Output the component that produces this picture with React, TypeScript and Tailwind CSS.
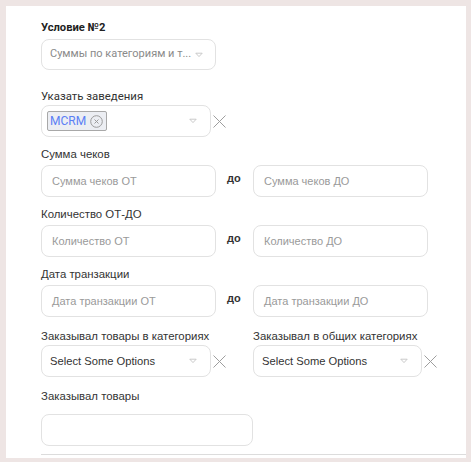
import React from 'react';

const roboto = "font-['Roboto',sans-serif]";
const arial = "font-['Liberation_Sans',Arial,sans-serif]";

const Caret: React.FC = () => (
  <svg width="8" height="6" viewBox="0 0 8 6" className="shrink-0">
    <path d="M0.8 1.2 H7.2 L4 4.6 Z" fill="none" stroke="#c4c4c4" strokeWidth="0.9" strokeLinejoin="round" />
  </svg>
);

const Cross: React.FC = () => (
  <svg width="15" height="15" viewBox="0 0 15 15" className="shrink-0">
    <path d="M1.5 1.5 L13.5 13.5 M13.5 1.5 L1.5 13.5" stroke="#9e9e9e" strokeWidth="1" />
  </svg>
);

const Label: React.FC<{ text: string; className?: string }> = ({ text, className = '' }) => (
  <div className={`${arial} text-[11.4px] leading-4 text-[#333] ${className}`}>{text}</div>
);

const TextBox: React.FC<{ placeholder?: string; width: string }> = ({ placeholder = '', width }) => (
  <div
    className={`${width} h-[32px] shrink-0 rounded-[8px] border border-[#e2e2e2] bg-white px-[10px] flex items-center ${arial} text-[11px] text-[#9a9a9a] whitespace-nowrap`}
  >
    {placeholder}
  </div>
);

const RangeRow: React.FC<{ label: string; from: string; to: string; top: string }> = ({ label, from, to, top }) => (
  <div className={top}>
    <Label text={label} />
    <div className="mt-[3px] flex items-center">
      <TextBox placeholder={from} width="w-[175px]" />
      <div className={`w-[37px] pl-[11px] -mt-[6px] ${arial} text-[11px] font-bold text-[#333]`}>до</div>
      <TextBox placeholder={to} width="w-[175px]" />
    </div>
  </div>
);

const SelectWithClear: React.FC<{ width: string; text: string }> = ({ width, text }) => (
  <div className="flex items-center">
    <div
      className={`${width} h-[32px] rounded-[8px] border border-[#e2e2e2] bg-white pl-[8px] pr-[13px] flex items-center justify-between ${arial} text-[11.2px] text-[#333] whitespace-nowrap`}
    >
      <span>{text}</span>
      <Caret />
    </div>
    <div className="ml-[1px]">
      <Cross />
    </div>
  </div>
);

export default function App() {
  return (
    <div className="min-h-[462px] w-[471px] bg-[#eee5e4] p-[6px]">
      <div className="w-[460px] bg-white pl-[35px] pt-[14px] pb-[1px]">
        <div className={`${roboto} text-[11.2px] leading-4 font-bold text-[#222]`}>Условие №2</div>
        <div
          className={`mt-[3px] w-[175px] h-[31px] rounded-[8px] border border-[#e2e2e2] pl-[8px] pr-[12px] flex items-center justify-between ${roboto} text-[11px] text-[#8a8a8a] whitespace-nowrap overflow-hidden`}
        >
          <span>Суммы по категориям и т...</span>
          <Caret />
        </div>

        <div className={`mt-[18px] ${roboto} text-[11.4px] leading-4 text-[#333]`}>Указать заведения</div>
        <div className="mt-[1px] flex items-center">
          <div className="w-[170px] h-[32px] rounded-[8px] border border-[#e2e2e2] pl-[5px] pr-[13px] flex items-center justify-between">
            <div className="h-[20px] flex items-center gap-[4px] rounded-[2px] border border-[#a8a8a8] bg-[#eceef3] pl-[2px] pr-[3px]">
              <span className={`${roboto} text-[12px] text-[#5b7ff5]`}>MCRM</span>
              <svg width="13" height="13" viewBox="0 0 13 13">
                <circle cx="6.5" cy="6.5" r="5.8" fill="none" stroke="#9a9a9a" strokeWidth="1" />
                <path d="M4.5 4.5 L8.5 8.5 M8.5 4.5 L4.5 8.5" stroke="#9a9a9a" strokeWidth="1" />
              </svg>
            </div>
            <Caret />
          </div>
          <div className="ml-[1px]">
            <Cross />
          </div>
        </div>

        <RangeRow top="mt-[9px]" label="Сумма чеков" from="Сумма чеков ОТ" to="Сумма чеков ДО" />
        <RangeRow top="mt-[9px]" label="Количество ОТ-ДО" from="Количество ОТ" to="Количество ДО" />
        <RangeRow top="mt-[9px]" label="Дата транзакции" from="Дата транзакции ОТ" to="Дата транзакции ДО" />

        <div className="mt-[11px] flex">
          <div className="w-[212px]">
            <Label text="Заказывал товары в категориях" />
            <div className="mt-[1px]">
              <SelectWithClear width="w-[170px]" text="Select Some Options" />
            </div>
          </div>
          <div>
            <Label text="Заказывал в общих категориях" />
            <div className="mt-[1px]">
              <SelectWithClear width="w-[169px]" text="Select Some Options" />
            </div>
          </div>
        </div>

        <Label text="Заказывал товары" className="mt-[11px]" />
        <div className="mt-[10px]">
          <TextBox width="w-[212px]" />
        </div>
        <div className="mt-[8px] h-px bg-[#dcdcdc]" />
        <div className="h-[2px]" />
      </div>
    </div>
  );
}
